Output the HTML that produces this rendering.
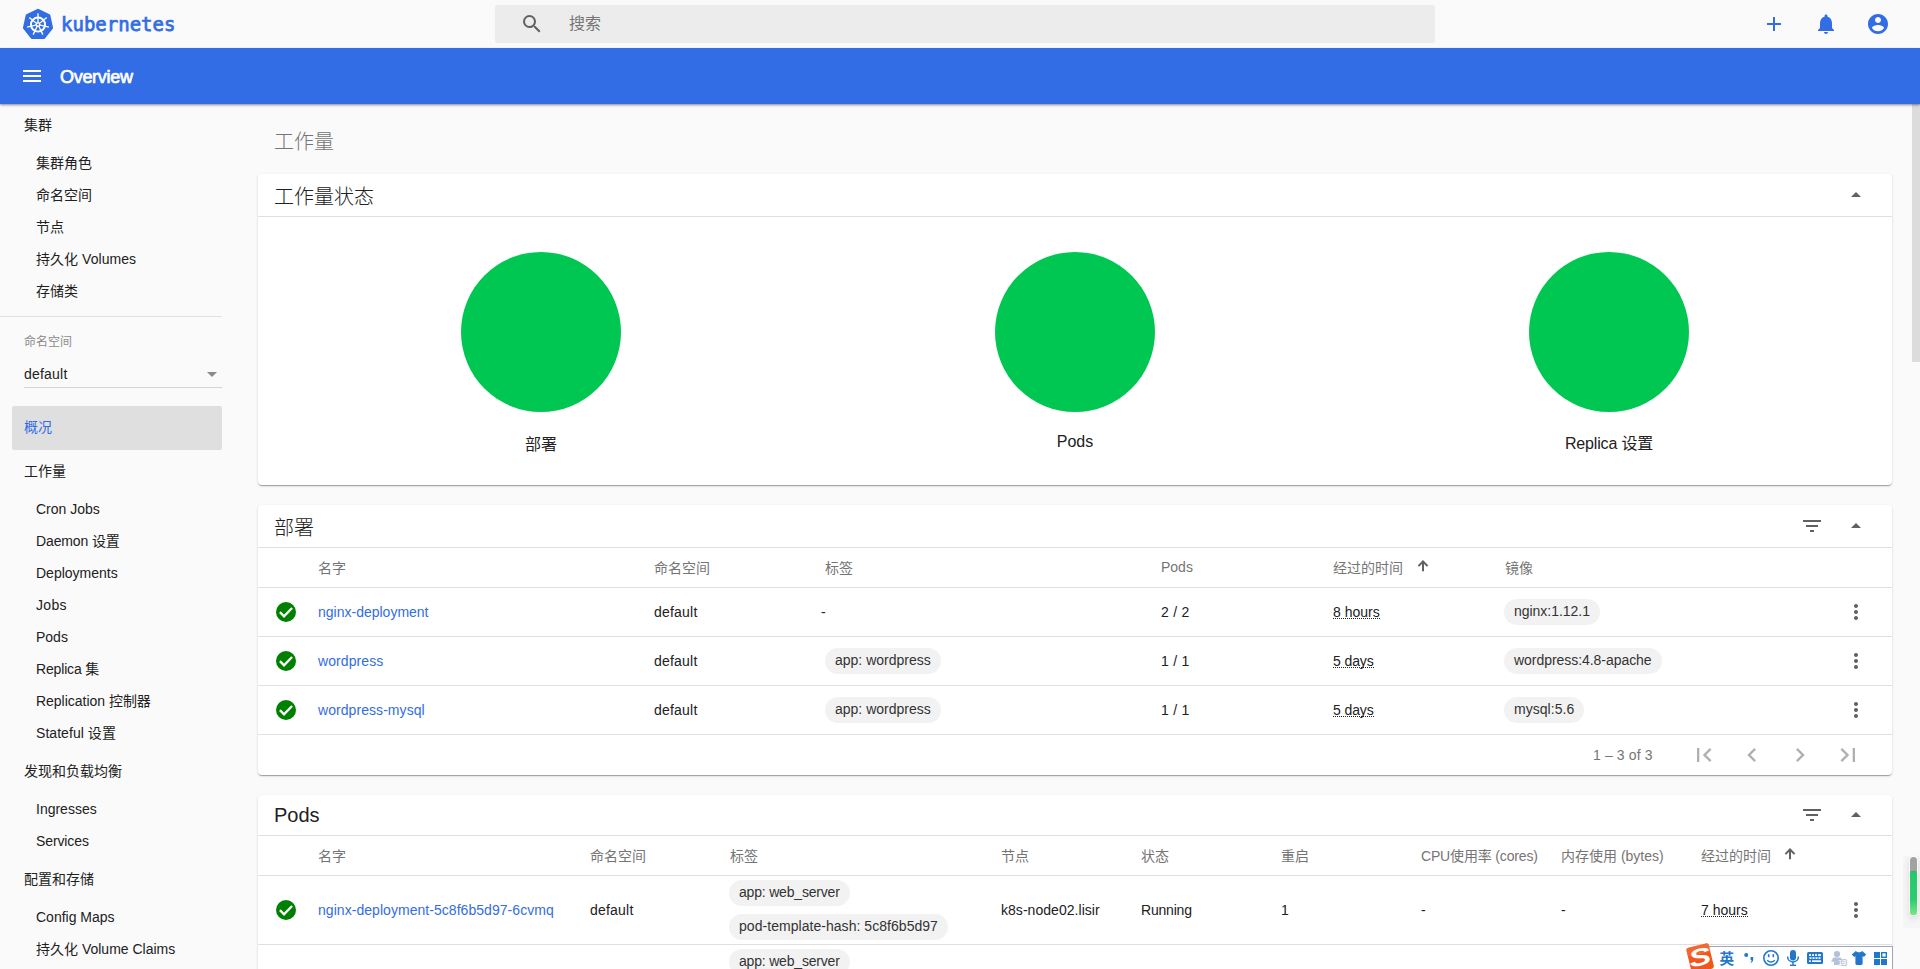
<!DOCTYPE html>
<html lang="zh-CN">
<head>
<meta charset="utf-8">
<title>Overview - Kubernetes Dashboard</title>
<style>
*{box-sizing:border-box;margin:0;padding:0}
html,body{width:1920px;height:969px;overflow:hidden;background:#fafafa}
body{position:relative;font-family:"Liberation Sans","Noto Sans CJK SC",sans-serif;font-size:14px;color:#212121;-webkit-font-smoothing:antialiased}
.abs{position:absolute}
.t{position:absolute;white-space:nowrap;line-height:20px;height:20px}
/* top bar */
#topbar{position:absolute;left:0;top:0;width:1920px;height:48px;background:#fafafa}
#brand{position:absolute;left:61px;top:12px;font-family:"DejaVu Sans Mono","Liberation Mono",monospace;font-weight:normal;font-size:19px;line-height:26px;color:#326de6;letter-spacing:0;-webkit-text-stroke:0.750px #326de6;transform:translateY(-0.600px)}
#search{position:absolute;left:495px;top:5px;width:940px;height:38px;background:#ececec;border-radius:2px}
#search .ph{position:absolute;left:74px;top:8px;font-size:16px;line-height:22px;color:#757575}
/* blue bar */
#bluebar{position:absolute;left:0;top:48px;width:1920px;height:56px;background:#326de6;box-shadow:0 1px 2px rgba(0,0,0,.38),0 2px 4px rgba(0,0,0,.08)}
#bluebar .title{position:absolute;left:60px;top:17px;font-size:18px;line-height:24px;font-weight:normal;color:#fff;-webkit-text-stroke:0.700px #fff;letter-spacing:-0.300px}
/* sidebar */
.nav{position:absolute;white-space:nowrap;line-height:20px;height:20px;font-size:14px;color:#212121}
.nav.h{left:24px}
.nav.s{left:36px}
/* cards */
.card{position:absolute;left:258px;width:1634px;background:#fff;border-radius:4px;box-shadow:0 2px 1px -1px rgba(0,0,0,.2),0 1px 1px 0 rgba(0,0,0,.14),0 1px 3px 0 rgba(0,0,0,.12)}
.card .ttl{position:absolute;left:16px;font-weight:300;font-size:20px;line-height:28px;color:#212121;white-space:nowrap}
.hl{position:absolute;left:0;width:1634px;height:1px;background:#e0e0e0}
.th{position:absolute;white-space:nowrap;font-size:14px;line-height:20px;color:#757575}
.td{position:absolute;white-space:nowrap;font-size:14px;line-height:20px;color:#212121}
.lnk{color:#326de6}
.chip{position:absolute;white-space:nowrap;height:26px;line-height:24px;border-radius:13px;background:#f2f2f2;font-size:14px;color:#333;padding:0 10px}
.dot{border-bottom:1px dotted #212121;line-height:11px;height:12px;display:inline-block}
svg{position:absolute;overflow:visible}
</style>
</head>
<body>

<!-- ===== top bar ===== -->
<div id="topbar">
  <svg id="logo" style="left:22px;top:8px" width="32" height="32" viewBox="0 0 32 32"><polygon points="16.00,2.23 26.87,7.62 29.55,19.74 22.03,29.45 9.97,29.45 2.45,19.74 5.13,7.62" fill="#326de6" stroke="#326de6" stroke-width="3" stroke-linejoin="round"/><circle cx="16" cy="16.55" r="7.050" fill="none" stroke="#fff" stroke-width="1.900"/><path d="M16 16.55L16.00 5.35M16 16.55L24.76 9.57M16 16.55L26.92 19.04M16 16.55L20.86 26.64M16 16.55L11.14 26.64M16 16.55L5.08 19.04M16 16.55L7.24 9.57" stroke="#fff" stroke-width="1.350" fill="none"/><circle cx="16" cy="16.55" r="2.400" fill="#fff"/><circle cx="16" cy="16.55" r="1" fill="#326de6"/></svg>
  <div id="brand">kubernetes</div>
  <div id="search">
    <svg style="left:24.500px;top:7px" width="24" height="24" viewBox="0 0 24 24"><path fill="#616161" d="M15.5 14h-.79l-.28-.27A6.471 6.471 0 0 0 16 9.5 6.500 6.500 0 1 0 9.500 16c1.610 0 3.090-.59 4.230-1.570l.27.280v.79l5 4.990L20.490 19l-4.990-5zm-6 0C7.010 14 5 11.990 5 9.500S7.010 5 9.500 5 14 7.010 14 9.500 11.990 14 9.500 14z"/></svg>
    <div class="ph">搜索</div>
  </div>
  <svg style="left:1762px;top:12px" width="24" height="24" viewBox="0 0 24 24"><path fill="#326de6" d="M19 13h-6v6h-2v-6H5v-2h6V5h2v6h6v2z"/></svg>
  <svg style="left:1814px;top:12px" width="24" height="24" viewBox="0 0 24 24"><path fill="#326de6" d="M12 22c1.100 0 2-.9 2-2h-4c0 1.100.89 2 2 2zm6-6v-5c0-3.070-1.640-5.640-4.500-6.320V4c0-.83-.67-1.500-1.500-1.500s-1.500.67-1.500 1.500v.68C7.630 5.360 6 7.920 6 11v5l-2 2v1h16v-1l-2-2z"/></svg>
  <svg style="left:1866px;top:12px" width="24" height="24" viewBox="0 0 24 24"><path fill="#326de6" d="M12 2C6.480 2 2 6.480 2 12s4.480 10 10 10 10-4.480 10-10S17.520 2 12 2zm0 3c1.660 0 3 1.340 3 3s-1.340 3-3 3-3-1.340-3-3 1.340-3 3-3zm0 14.200a7.200 7.200 0 0 1-6-3.220c.03-1.990 4-3.080 6-3.080 1.990 0 5.970 1.090 6 3.080a7.200 7.200 0 0 1-6 3.220z"/></svg>
</div>

<!-- ===== sidebar ===== -->
<div id="sidebar">
  <div class="nav h" style="top:115px">集群</div>
  <div class="nav s" style="top:153px">集群角色</div>
  <div class="nav s" style="top:185px">命名空间</div>
  <div class="nav s" style="top:217px">节点</div>
  <div class="nav s" style="top:249px;letter-spacing:0.047px/*c*/">持久化 Volumes</div>
  <div class="nav s" style="top:281px">存储类</div>
  <div class="abs" style="left:0;top:316px;width:222px;height:1px;background:#e0e0e0"></div>
  <div class="nav h" style="top:332px;font-size:12px;color:#8a8a8a">命名空间</div>
  <div class="nav h" style="top:364px;letter-spacing:0.210px/*c*/">default</div>
  <svg style="left:206.500px;top:371.500px" width="10" height="5" viewBox="0 0 10 5"><path fill="#8a8a8a" d="M0 0h10L5 5z"/></svg>
  <div class="abs" style="left:24px;top:387px;width:198px;height:1px;background:#d4d4d4"></div>
  <div class="abs" style="left:12px;top:406px;width:210px;height:44px;background:#dfdfdf;border-radius:2px"></div>
  <div class="nav h" style="top:417px;color:#326de6">概况</div>
  <div class="nav h" style="top:461px">工作量</div>
  <div class="nav s" style="top:499px">Cron Jobs</div>
  <div class="nav s" style="top:531px;letter-spacing:-0.123px/*c*/">Daemon 设置</div>
  <div class="nav s" style="top:563px">Deployments</div>
  <div class="nav s" style="top:595px;letter-spacing:0.305px/*c*/">Jobs</div>
  <div class="nav s" style="top:627px">Pods</div>
  <div class="nav s" style="top:659px;letter-spacing:-0.161px/*c*/">Replica 集</div>
  <div class="nav s" style="top:691px;letter-spacing:-0.021px/*c*/">Replication 控制器</div>
  <div class="nav s" style="top:723px;letter-spacing:0.055px/*c*/">Stateful 设置</div>
  <div class="nav h" style="top:761px">发现和负载均衡</div>
  <div class="nav s" style="top:799px">Ingresses</div>
  <div class="nav s" style="top:831px;letter-spacing:-0.113px/*c*/">Services</div>
  <div class="nav h" style="top:869px">配置和存储</div>
  <div class="nav s" style="top:907px">Config Maps</div>
  <div class="nav s" style="top:939px">持久化 Volume Claims</div>
</div>

<!-- ===== main ===== -->
<div id="main">
  <div class="t" style="left:274px;top:128px;font-weight:300;font-size:20px;line-height:28px;height:28px;color:#757575">工作量</div>
  <div class="card" style="top:174px;height:311px">
    <div class="ttl" style="top:9px">工作量状态</div>
    <svg style="left:1593px;top:18px" width="10" height="5" viewBox="0 0 10 5"><path fill="#616161" d="M0 5h10L5 0z"/></svg>
    <div class="hl" style="top:42px"></div>
    <div class="abs" style="left:203px;top:78px;width:160px;height:160px;border-radius:50%;background:#00c752"></div>
    <div class="t" style="left:183px;width:200px;text-align:center;top:259px;font-size:16px;line-height:22px;height:22px;color:#212121;transform:translateY(.500px)">部署</div>
    <div class="abs" style="left:737px;top:78px;width:160px;height:160px;border-radius:50%;background:#00c752"></div>
    <div class="t" style="left:717px;width:200px;text-align:center;top:257px;font-size:16px;line-height:22px;height:22px;color:#212121">Pods</div>
    <div class="abs" style="left:1271px;top:78px;width:160px;height:160px;border-radius:50%;background:#00c752"></div>
    <div class="t" style="left:1251px;width:200px;text-align:center;top:259px;font-size:16px;line-height:22px;height:22px;color:#212121;letter-spacing:-0.164px/*c*/">Replica 设置</div>
  </div>
  <div class="card" style="top:505px;height:270px">
    <div class="ttl" style="top:9px">部署</div>
    <svg style="left:1542px;top:9px" width="24" height="24" viewBox="0 0 24 24"><path fill="#616161" d="M10 18h4v-2h-4v2zM3 6v2h18V6H3zm3 7h12v-2H6v2z"/></svg>
    <svg style="left:1593px;top:18px" width="10" height="5" viewBox="0 0 10 5"><path fill="#616161" d="M0 5h10L5 0z"/></svg>
    <div class="hl" style="top:42px"></div>
    <div class="th" style="left:60px;top:53px">名字</div>
    <div class="th" style="left:396px;top:53px">命名空间</div>
    <div class="th" style="left:567px;top:53px">标签</div>
    <div class="th" style="left:903px;top:52px">Pods</div>
    <div class="th" style="left:1075px;top:53px">经过的时间</div>
    <div class="th" style="left:1247px;top:53px">镜像</div>
    <svg style="left:1159px;top:55px" width="12" height="12" viewBox="0 0 12 12"><path fill="none" stroke="#616161" stroke-width="2" d="M6 11.300V1.600M1.400 6.100L6 1.500l4.600 4.600"/></svg>
    <div class="hl" style="top:82px"></div>
    <svg style="left:18px;top:97px" width="20" height="20" viewBox="0 0 24 24"><circle cx="12" cy="12" r="12" fill="#008000"/><path fill="none" stroke="#fff" stroke-width="2.800" d="M4.700 12.200l4.900 4.900 9.700-9.900"/></svg>
    <div class="td lnk" style="left:60px;top:97px">nginx-deployment</div>
    <div class="td" style="left:396px;top:97px;letter-spacing:0.210px/*c*/">default</div>
    <div class="td" style="left:563px;top:97px;letter-spacing:-0.797px/*c*/">-</div>
    <div class="td" style="left:903px;top:97px;letter-spacing:0.244px/*c*/">2 / 2</div>
    <div class="td" style="left:1075px;top:97px"><span class="dot">8 hours</span></div>
    <div class="chip" style="left:1246px;top:94px;letter-spacing:-0.031px/*c*/">nginx:1.12.1</div>
    <svg style="left:1586px;top:95px" width="24" height="24" viewBox="0 0 24 24"><path fill="#5f5f5f" d="M12 8c1.100 0 2-.9 2-2s-.9-2-2-2-2 .9-2 2 .9 2 2 2zm0 2c-1.100 0-2 .9-2 2s.9 2 2 2 2-.9 2-2-.9-2-2-2zm0 6c-1.100 0-2 .9-2 2s.9 2 2 2 2-.9 2-2-.9-2-2-2z"/></svg>
    <div class="hl" style="top:131px"></div>
    <svg style="left:18px;top:146px" width="20" height="20" viewBox="0 0 24 24"><circle cx="12" cy="12" r="12" fill="#008000"/><path fill="none" stroke="#fff" stroke-width="2.800" d="M4.700 12.200l4.900 4.900 9.700-9.900"/></svg>
    <div class="td lnk" style="left:60px;top:146px;letter-spacing:0.087px/*c*/">wordpress</div>
    <div class="td" style="left:396px;top:146px;letter-spacing:0.210px/*c*/">default</div>
    <div class="chip" style="left:567px;top:143px">app: wordpress</div>
    <div class="td" style="left:903px;top:146px;letter-spacing:0.244px/*c*/">1 / 1</div>
    <div class="td" style="left:1075px;top:146px"><span class="dot" style="letter-spacing:-0.107px/*c*/">5 days</span></div>
    <div class="chip" style="left:1246px;top:143px;letter-spacing:-0.046px/*c*/">wordpress:4.8-apache</div>
    <svg style="left:1586px;top:144px" width="24" height="24" viewBox="0 0 24 24"><path fill="#5f5f5f" d="M12 8c1.100 0 2-.9 2-2s-.9-2-2-2-2 .9-2 2 .9 2 2 2zm0 2c-1.100 0-2 .9-2 2s.9 2 2 2 2-.9 2-2-.9-2-2-2zm0 6c-1.100 0-2 .9-2 2s.9 2 2 2 2-.9 2-2-.9-2-2-2z"/></svg>
    <div class="hl" style="top:180px"></div>
    <svg style="left:18px;top:195px" width="20" height="20" viewBox="0 0 24 24"><circle cx="12" cy="12" r="12" fill="#008000"/><path fill="none" stroke="#fff" stroke-width="2.800" d="M4.700 12.200l4.900 4.900 9.700-9.900"/></svg>
    <div class="td lnk" style="left:60px;top:195px;letter-spacing:0.061px/*c*/">wordpress-mysql</div>
    <div class="td" style="left:396px;top:195px;letter-spacing:0.210px/*c*/">default</div>
    <div class="chip" style="left:567px;top:192px">app: wordpress</div>
    <div class="td" style="left:903px;top:195px;letter-spacing:0.244px/*c*/">1 / 1</div>
    <div class="td" style="left:1075px;top:195px"><span class="dot" style="letter-spacing:-0.107px/*c*/">5 days</span></div>
    <div class="chip" style="left:1246px;top:192px;letter-spacing:0.043px/*c*/">mysql:5.6</div>
    <svg style="left:1586px;top:193px" width="24" height="24" viewBox="0 0 24 24"><path fill="#5f5f5f" d="M12 8c1.100 0 2-.9 2-2s-.9-2-2-2-2 .9-2 2 .9 2 2 2zm0 2c-1.100 0-2 .9-2 2s.9 2 2 2 2-.9 2-2-.9-2-2-2zm0 6c-1.100 0-2 .9-2 2s.9 2 2 2 2-.9 2-2-.9-2-2-2z"/></svg>
    <div class="hl" style="top:229px"></div>
    <div class="td" style="left:1335px;top:240px;font-size:14px;color:#757575;letter-spacing:0.116px/*c*/">1 – 3 of 3</div>
    <svg style="left:1432px;top:236px" width="28" height="28" viewBox="0 0 24 24"><path fill="#b0b0b0" d="M18.410 16.590L13.820 12l4.590-4.590L17 6l-6 6 6 6zM6 6h2v12H6z"/></svg>
    <svg style="left:1480px;top:236px" width="28" height="28" viewBox="0 0 24 24"><path fill="#b0b0b0" d="M15.410 7.410L14 6l-6 6 6 6 1.410-1.410L10.830 12z"/></svg>
    <svg style="left:1528px;top:236px" width="28" height="28" viewBox="0 0 24 24"><path fill="#b0b0b0" d="M10 6L8.590 7.410 13.170 12l-4.580 4.590L10 18l6-6z"/></svg>
    <svg style="left:1576px;top:236px" width="28" height="28" viewBox="0 0 24 24"><path fill="#b0b0b0" d="M5.590 7.410L10.180 12l-4.590 4.590L7 18l6-6-6-6zM16 6h2v12h-2z"/></svg>
  </div>
  <div class="card" style="top:795px;height:300px">
    <div class="ttl" style="top:6px">Pods</div>
    <svg style="left:1542px;top:8px" width="24" height="24" viewBox="0 0 24 24"><path fill="#616161" d="M10 18h4v-2h-4v2zM3 6v2h18V6H3zm3 7h12v-2H6v2z"/></svg>
    <svg style="left:1593px;top:17px" width="10" height="5" viewBox="0 0 10 5"><path fill="#616161" d="M0 5h10L5 0z"/></svg>
    <div class="hl" style="top:40px"></div>
    <div class="th" style="left:60px;top:51px">名字</div>
    <div class="th" style="left:332px;top:51px">命名空间</div>
    <div class="th" style="left:472px;top:51px">标签</div>
    <div class="th" style="left:743px;top:51px">节点</div>
    <div class="th" style="left:883px;top:51px">状态</div>
    <div class="th" style="left:1023px;top:51px">重启</div>
    <div class="th" style="left:1163px;top:51px;letter-spacing:-0.162px/*c*/">CPU使用率 (cores)</div>
    <div class="th" style="left:1303px;top:51px">内存使用 (bytes)</div>
    <div class="th" style="left:1443px;top:51px">经过的时间</div>
    <svg style="left:1526px;top:53px" width="12" height="12" viewBox="0 0 12 12"><path fill="none" stroke="#616161" stroke-width="2" d="M6 11.300V1.600M1.400 6.100L6 1.500l4.600 4.600"/></svg>
    <div class="hl" style="top:80px"></div>
    <svg style="left:18px;top:105px" width="20" height="20" viewBox="0 0 24 24"><circle cx="12" cy="12" r="12" fill="#008000"/><path fill="none" stroke="#fff" stroke-width="2.800" d="M4.700 12.200l4.900 4.900 9.700-9.900"/></svg>
    <div class="td lnk" style="left:60px;top:105px;letter-spacing:0.046px/*c*/">nginx-deployment-5c8f6b5d97-6cvmq</div>
    <div class="td" style="left:332px;top:105px;letter-spacing:0.210px/*c*/">default</div>
    <div class="chip" style="left:471px;top:85px;letter-spacing:-0.188px/*c*/">app: web_server</div>
    <div class="chip" style="left:471px;top:119px;letter-spacing:0.043px/*c*/">pod-template-hash: 5c8f6b5d97</div>
    <div class="td" style="left:743px;top:105px;letter-spacing:0.041px/*c*/">k8s-node02.lisir</div>
    <div class="td" style="left:883px;top:105px;letter-spacing:-0.192px/*c*/">Running</div>
    <div class="td" style="left:1023px;top:105px">1</div>
    <div class="td" style="left:1163px;top:105px;letter-spacing:-0.797px/*c*/">-</div>
    <div class="td" style="left:1303px;top:105px;letter-spacing:-0.797px/*c*/">-</div>
    <div class="td" style="left:1443px;top:105px"><span class="dot">7 hours</span></div>
    <svg style="left:1586px;top:103px" width="24" height="24" viewBox="0 0 24 24"><path fill="#5f5f5f" d="M12 8c1.100 0 2-.9 2-2s-.9-2-2-2-2 .9-2 2 .9 2 2 2zm0 2c-1.100 0-2 .9-2 2s.9 2 2 2 2-.9 2-2-.9-2-2-2zm0 6c-1.100 0-2 .9-2 2s.9 2 2 2 2-.9 2-2-.9-2-2-2z"/></svg>
    <div class="hl" style="top:149px"></div>
    <div class="chip" style="left:471px;top:154px;letter-spacing:-0.188px/*c*/">app: web_server</div>
  </div>
</div>


<!-- ===== page scrollbar ===== -->
<div class="abs" style="left:1912px;top:104px;width:8px;height:258px;background:#dcdcdc"></div>

<!-- ===== floating meter widget ===== -->
<div class="abs" style="left:1903px;top:856px;width:17px;height:72px;border-radius:3px 0 0 3px;background:rgba(0,0,0,.018)"></div>
<div class="abs" style="left:1910px;top:857px;width:7px;height:58px;border-radius:3.500px;background:#a2a2a2;box-shadow:0 0 0 1px rgba(255,255,255,.75),0 3px 6px 1px rgba(0,0,0,.10)">
  <div class="abs" style="left:0;top:14px;width:7px;height:44px;border-radius:2px 2px 3.500px 3.500px;background:linear-gradient(#1fb95c 0,#27c96c 5%,#2ecc71 65%,#78ea86 100%)"></div>
</div>

<!-- ===== IME toolbar ===== -->
<div id="ime" class="abs" style="left:1702px;top:946px;width:191px;height:23px;background:#fff;border-top:1px solid #9ea7b6;border-right:1px solid #9ea7b6"></div>
<svg style="left:1680px;top:940px" width="214" height="29" viewBox="0 0 214 29"><g transform="rotate(-13.5 19.90 17.20)"><rect x="8.40" y="5.20" width="23" height="26" rx="2.500" fill="#f1561c"/><rect x="8.40" y="5.20" width="23" height="9" rx="2.500" fill="#f8763f" opacity=".55"/><text x="19.90" y="25.40" text-anchor="middle" font-family="Liberation Sans,sans-serif" font-weight="bold" font-style="italic" font-size="24" fill="#fff" transform="translate(19.90 0) scale(1.380 1) translate(-19.90 0)">S</text></g><text x="39.5" y="24" font-family="Liberation Sans,Noto Sans CJK SC,sans-serif" font-weight="bold" font-size="14.600" fill="#2277cc">英</text><circle cx="66.2" cy="15" r="2" fill="#2277cc"/><path d="M70.6 17h2.600v2.600c0 2-1.200 3.300-3.600 3.600c1.400-.8 2-1.800 1.900-3.300h-.9z" fill="#2277cc"/><circle cx="91" cy="18" r="7.200" fill="none" stroke="#2277cc" stroke-width="1.600"/><rect x="87.9" y="14.2" width="1.600" height="3" fill="#2277cc"/><rect x="92.5" y="14.2" width="1.600" height="3" fill="#2277cc"/><path d="M87.2 20.2q3.800 3.600 7.600 0" fill="none" stroke="#2277cc" stroke-width="1.400"/><rect x="110" y="10" width="6" height="10.500" rx="3" fill="#2277cc"/><path d="M107.6 16.5c0 3 2 5.400 5.400 5.400s5.400-2.400 5.400-5.400" fill="none" stroke="#2277cc" stroke-width="1.500"/><rect x="112.3" y="22" width="1.400" height="3" fill="#2277cc"/><rect x="110" y="24.6" width="6" height="1.400" fill="#2277cc"/><rect x="127" y="12" width="16" height="12" rx="1.500" fill="#2277cc"/><rect x="129" y="14.2" width="2" height="1.700" fill="#fff"/><rect x="132" y="14.2" width="2" height="1.700" fill="#fff"/><rect x="135" y="14.2" width="2" height="1.700" fill="#fff"/><rect x="138" y="14.2" width="3" height="1.700" fill="#fff"/><rect x="129.5" y="17.2" width="2" height="1.700" fill="#fff"/><rect x="132.5" y="17.2" width="2" height="1.700" fill="#fff"/><rect x="135.5" y="17.2" width="2" height="1.700" fill="#fff"/><rect x="138.5" y="17.2" width="2" height="1.700" fill="#fff"/><rect x="129" y="20.3" width="1.800" height="1.700" fill="#fff"/><rect x="132" y="20.3" width="9" height="1.700" fill="#fff"/><circle cx="157" cy="14" r="3.100" fill="#b4c2d9"/><path d="M151 21.5l2.500-4h7l2 2.500v5h-8.500v-3.200z" fill="#b4c2d9"/><rect x="161.500" y="19.600" width="5.200" height="5.900" rx="0.800" fill="#fff" stroke="#b4c2d9" stroke-width="0.900"/><text x="158.300" y="24.900" font-family="Liberation Sans,sans-serif" font-weight="bold" font-size="7" fill="#fff" stroke="#a9b8d2" stroke-width="0.700" paint-order="stroke">13</text><path d="M175.8 11c1.500 1.700 4.900 1.700 6.400 0l4 3.600-2.300 2.500-1.300-1v7.400c0 .9-.5 1.400-1.400 1.400h-4.400c-.9 0-1.400-.5-1.400-1.400v-7.400l-1.300 1-2.300-2.500z" fill="#2277cc"/><rect x="194" y="12" width="6" height="6" fill="#2277cc"/><rect x="194" y="19" width="6" height="6" fill="#2277cc"/><rect x="201" y="19" width="6" height="6" fill="#2277cc"/><rect x="201.7" y="12.7" width="4.600" height="4.600" fill="#fff" stroke="#2277cc" stroke-width="1.400"/></svg>

<!-- ===== blue bar ===== -->
<div id="bluebar">
  <svg style="left:20px;top:16px" width="24" height="24" viewBox="0 0 24 24"><path fill="#fff" d="M3 18h18v-2H3v2zm0-5h18v-2H3v2zm0-7v2h18V6H3z"/></svg>
  <div class="title">Overview</div>
</div>

</body>
</html>
